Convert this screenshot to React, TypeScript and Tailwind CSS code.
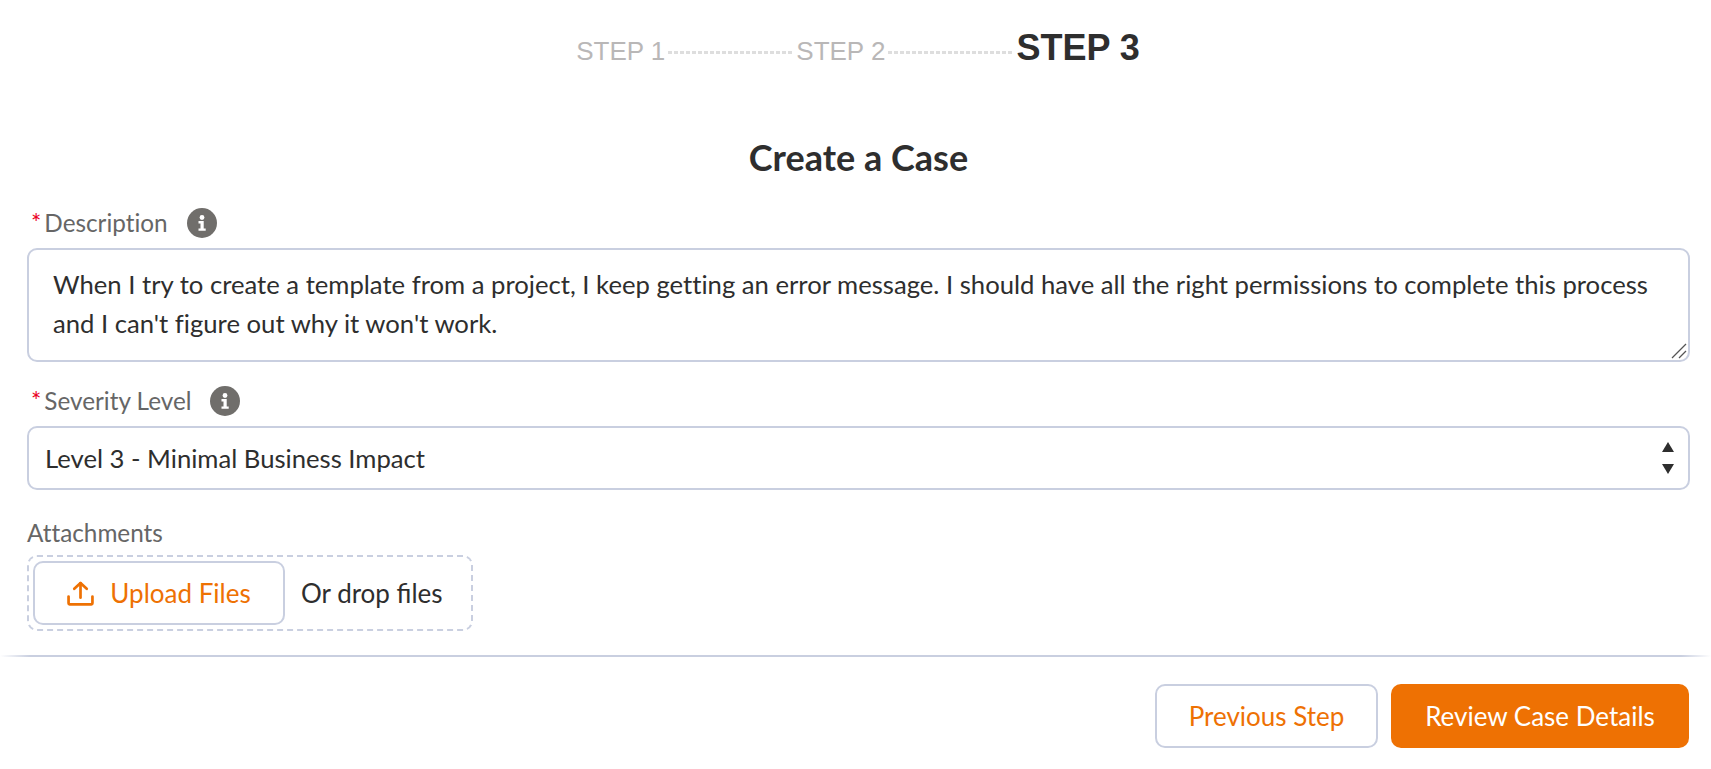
const Required = () => <span className="mr-[3px] text-[#ea001e]">*</span>;

const InfoIcon = () => (
  <svg viewBox="0 0 30 30" className="ml-[19px] size-[30px]">
    <circle cx="15" cy="15" r="15" fill="#706e6b" />
    <circle cx="15" cy="9.5" r="2.4" fill="#fff" />
    <path d="M11.5 13h5.2v7.4h2v2.4h-7.2v-2.4h2v-5h-2z" fill="#fff" />
  </svg>
);

const UploadIcon = () => (
  <svg viewBox="0 0 26 26" className="size-[27px]" fill="none" stroke="#ee7103" strokeWidth="2.6" strokeLinecap="round" strokeLinejoin="round">
    <path d="M13 17V3" />
    <path d="M7 8.5 13 3l6 5.5" />
    <path d="M1.5 16v6.5a1 1 0 0 0 1 1h21a1 1 0 0 0 1-1V16" />
  </svg>
);

const SelectArrows = () => (
  <svg viewBox="0 0 12 32" className="pointer-events-none absolute right-[16px] top-[16px] h-[32px] w-[12px]" fill="#2e2e2e">
    <path d="M6 0l6 10H0z" />
    <path d="M0 22h12l-6 10z" />
  </svg>
);

const ResizeGrip = () => (
  <svg viewBox="0 0 16 16" className="pointer-events-none absolute bottom-[3px] right-[3px] size-[16px]" stroke="#555" strokeWidth="1.3" fill="none">
    <path d="M1 15 15 1" />
    <path d="M8 15l7-7" />
  </svg>
);

const StepLine = () => (
  <div className="mx-[3px] mb-[21px] h-[3px] w-[125px] self-end bg-[repeating-linear-gradient(90deg,#dedede_0_4px,transparent_4px_6px)]" />
);

export default function App() {
  return (
    <div className="h-[769px] w-[1711px] overflow-hidden bg-white font-['Lato','Liberation_Sans',sans-serif] text-[#2e2e2e]">
      <div className="h-[98px] pt-[21px] font-['Liberation_Sans',sans-serif]">
        <div className="flex items-baseline justify-center pl-[5px]">
          <span className="text-[26px] text-[#b9b7b7]">STEP 1</span>
          <StepLine />
          <span className="text-[26px] text-[#b9b7b7]">STEP 2</span>
          <StepLine />
          <span className="text-[36px] font-bold text-[#2e2e2e]">STEP 3</span>
        </div>
      </div>

      <h1 className="mt-[37px] pl-[6px] text-center text-[36px] font-bold leading-[44px]">Create a Case</h1>

      <div className="px-[27px] pt-[26px]">
        <div className="flex h-[36px] items-center pl-[4px] text-[24.3px] text-[#666] [font-variant-ligatures:none]">
          <Required />
          Description
          <InfoIcon />
        </div>
        <div className="relative mt-[7px] w-[1663px]">
          <textarea
            readOnly
            className="block h-[114px] w-full resize-none rounded-[10px] border-2 border-[#c9cfe0] px-[24px] pb-[14px] pt-[15px] text-[25.66px] leading-[39px] text-[#2e2e2e] outline-none [font-variant-ligatures:none]"
            value="When I try to create a template from a project, I keep getting an error message. I should have all the right permissions to complete this process and I can't figure out why it won't work."
          />
          <ResizeGrip />
        </div>

        <div className="mt-[21px] flex h-[36px] items-center pl-[4px] text-[24.3px] text-[#666] [font-variant-ligatures:none]">
          <Required />
          Severity Level
          <InfoIcon />
        </div>
        <div className="relative mt-[7px] w-[1663px]">
          <select className="block h-[64px] w-full appearance-none rounded-[10px] border-2 border-[#c9cfe0] bg-white px-[16px] text-[25.66px] text-[#2e2e2e] outline-none">
            <option>Level 3 - Minimal Business Impact</option>
          </select>
          <SelectArrows />
        </div>

        <div className="mb-[5px] mt-[25px] text-[24.3px] leading-[35px] text-[#666] [font-variant-ligatures:none]">Attachments</div>
        <div className="flex h-[76px] w-[446px] items-center rounded-[10px] border-2 border-dashed border-[#c9cfe0] pl-[4px]">
          <button className="flex h-[64px] w-[252px] items-center justify-center gap-[16px] rounded-[10px] border-2 border-[#c9cfe0] bg-white text-[26px] text-[#ee7103]">
            <UploadIcon />
            Upload Files
          </button>
          <span className="ml-[16px] text-[26px]">Or drop files</span>
        </div>
      </div>

      <div className="mt-[24px] h-[2px] bg-[linear-gradient(90deg,#fff,#c9cfe0_30px,#c9cfe0_calc(100%-30px),#fff)]" />

      <div className="flex justify-end gap-[13px] pr-[22px] pt-[27px]">
        <button className="h-[64px] w-[223px] rounded-[10px] border-2 border-[#c9cfe0] bg-white text-[26px] text-[#ee7103]">Previous Step</button>
        <button className="h-[64px] w-[298px] rounded-[10px] bg-[#ee7103] text-[26px] text-white">Review Case Details</button>
      </div>
    </div>
  );
}
